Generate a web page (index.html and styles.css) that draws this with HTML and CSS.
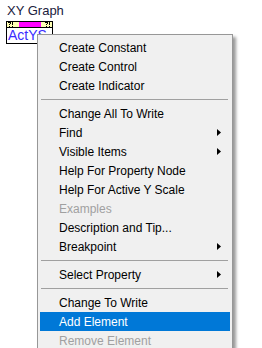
FILE: index.html
```html
<!DOCTYPE html>
<html lang="en">
<head>
  <meta charset="UTF-8" />
  <title>XY Graph property node menu</title>
  <link rel="stylesheet" href="styles.css">
</head>
<body>
  <div class="canvas">
    <div class="node-label">XY Graph</div>
    <div class="node">
      <div class="node-head">
        <svg class="warn" width="6" height="5" viewBox="0 0 6 5"><path d="M0 0h3v1h-3zM2 1h1v1h-1zM1 2h1v1h-1zM1 4h1v1h-1zM4 0h1v3h-1zM4 4h1v1h-1z" fill="#000"/></svg>
        <div class="node-bar"></div>
        <svg class="warn" width="6" height="5" viewBox="0 0 6 5"><path d="M0 0h3v1h-3zM2 1h1v1h-1zM1 2h1v1h-1zM1 4h1v1h-1zM4 0h1v3h-1zM4 4h1v1h-1z" fill="#000"/></svg>
      </div>
      <div class="node-row">
        <span class="node-prop">ActYS</span>
        <svg class="node-dir" width="6" height="9" viewBox="0 0 6 9"><rect x="0" y="0" width="1" height="9" fill="#000"/><polygon points="2,1 6,4.5 2,8" fill="#000"/></svg>
      </div>
    </div>

    <div class="menu">
      <div class="item">Create Constant</div>
      <div class="item">Create Control</div>
      <div class="item">Create Indicator</div>
      <div class="sep"></div>
      <div class="item">Change All To Write</div>
      <div class="item sub">Find<svg class="arrow" width="4" height="7" viewBox="0 0 4 7"><polygon points="0,0 4,3.5 0,7"/></svg></div>
      <div class="item sub">Visible Items<svg class="arrow" width="4" height="7" viewBox="0 0 4 7"><polygon points="0,0 4,3.5 0,7"/></svg></div>
      <div class="item">Help For Property Node</div>
      <div class="item">Help For Active Y Scale</div>
      <div class="item off">Examples</div>
      <div class="item">Description and Tip...</div>
      <div class="item sub">Breakpoint<svg class="arrow" width="4" height="7" viewBox="0 0 4 7"><polygon points="0,0 4,3.5 0,7"/></svg></div>
      <div class="sep"></div>
      <div class="item sub">Select Property<svg class="arrow" width="4" height="7" viewBox="0 0 4 7"><polygon points="0,0 4,3.5 0,7"/></svg></div>
      <div class="sep"></div>
      <div class="item">Change To Write</div>
      <div class="item active">Add Element</div>
      <div class="item off">Remove Element</div>
    </div>
  </div>
</body>
</html>
```

FILE: styles.css
```css
body {
  margin: 0;
  background: #fff;
  font-family: "Liberation Sans", Arial, sans-serif;
  font-size: 12px;
  color: #000;
  overflow: hidden;
}
.canvas {
  position: relative;
  width: 262px;
  height: 348px;
  overflow: hidden;
}
.node-label {
  padding: 4px 0 0 7px;
  height: 17px;
  font-size: 13px;
  line-height: 14px;
  color: #20203c;
}
.node {
  margin-left: 6px;
  width: 47px;
}
.node-head {
  display: flex;
  align-items: center;
  justify-content: space-between;
  height: 5px;
  padding: 0 1px;
  background: #ffffb4;
  border: 1px solid #000;
}
.node-bar {
  width: 22px;
  height: 5px;
  background: #ff00ff;
}
.node-row {
  display: flex;
  align-items: center;
  height: 15px;
  padding-left: 1px;
  border: 1px solid #000;
  border-top: none;
}
.node-prop {
  font-size: 14px;
  line-height: 15px;
  color: #3a2cff;
  white-space: nowrap;
}
.node-dir {
  margin-left: 6px;
}
.menu {
  position: absolute;
  left: 37px;
  top: 34px;
  width: 190px;
  padding: 3px 2px;
  background: #f0f0f0;
  border: 1px solid #979797;
  box-shadow: 3px 3px 3px rgba(0, 0, 0, 0.4);
}
.item {
  display: flex;
  align-items: center;
  justify-content: space-between;
  height: 19px;
  padding: 0 9px 0 19px;
  white-space: nowrap;
}
.item.off {
  color: #a0a0a0;
}
.item.active {
  background: #0078d7;
  color: #fff;
}
.arrow {
  fill: #000;
}
.sep {
  height: 1px;
  margin: 4px 2px 4px 1px;
  background: #a0a0a0;
}
```
